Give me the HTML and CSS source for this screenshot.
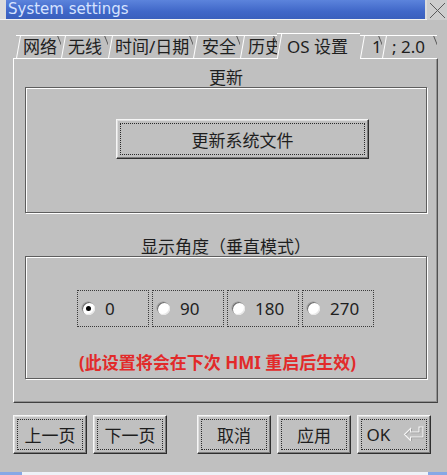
FILE: index.html
```html
<!DOCTYPE html>
<html lang="zh">
<head>
<meta charset="utf-8">
<title>System settings</title>
<link rel="stylesheet" href="styles.css">
</head>
<body>
<div class="window">
  <div class="titlebar">
    <div class="title">System settings</div>
    <div class="close">
      <svg width="20" height="20" viewBox="0 0 20 20"><path d="M3 3 L18 18 M18 3 L3 18" stroke="#5a5a5a" stroke-width="1" fill="none"/></svg>
    </div>
  </div>

  <div class="tabs">
    <div class="tab t-net">网络</div>
    <div class="tab t-wifi">无线</div>
    <div class="tab t-time">时间/日期</div>
    <div class="tab t-sec">安全</div>
    <div class="tab t-hist">历史</div>
    <div class="tab t-os active">OS 设置</div>
    <div class="tab t-one">1</div>
    <div class="tab t-ver">; 2.0</div>
  </div>

  <div class="panel">
    <div class="group-label">更新</div>
    <div class="group g1">
      <button class="btn btn-update">更新系统文件</button>
    </div>

    <div class="group-label gl2">显示角度（垂直模式）</div>
    <div class="group g2">
      <div class="radios">
        <label class="radio checked"><span class="dot"></span>0</label>
        <label class="radio"><span class="dot"></span>90</label>
        <label class="radio"><span class="dot"></span>180</label>
        <label class="radio"><span class="dot"></span>270</label>
      </div>
      <div class="note">(此设置将会在下次 HMI 重启后生效)</div>
    </div>
  </div>

  <div class="actions">
    <button class="btn">上一页</button>
    <button class="btn btn-gap">下一页</button>
    <button class="btn">取消</button>
    <button class="btn">应用</button>
    <button class="btn btn-ok">OK
      <svg class="enter" width="22" height="15" viewBox="0 0 22 15">
        <path d="M1.5 8.5 L7.5 2.5 L7.5 6 L16 6 L16 1 L20 1 L20 11 L7.5 11 L7.5 14.5 Z" fill="none" stroke="#8a8a8a" stroke-width="1" transform="translate(0.7 0.7)"/>
        <path d="M1.5 8.5 L7.5 2.5 L7.5 6 L16 6 L16 1 L20 1 L20 11 L7.5 11 L7.5 14.5 Z" fill="none" stroke="#f6f6f6" stroke-width="1.1"/>
      </svg>
    </button>
  </div>

  <div class="footer">
    <div class="foot-left"></div>
    <div class="foot-right"></div>
  </div>
</div>
</body>
</html>
```

FILE: styles.css
```css
html, body {
  margin: 0;
  padding: 0;
}

body {
  width: 447px;
  height: 475px;
  overflow: hidden;
  background: #c0c0c0;
  color: #1e1e1e;
  font-family: "Noto Sans", "Noto Sans CJK SC", sans-serif;
}

.window {
  height: 475px;
  display: flex;
  flex-direction: column;
}

/* Title bar */
.titlebar {
  display: flex;
  height: 19px;
  background: #dcdcdc;
  border-bottom: 1px solid #f2f2f2;
  flex: none;
}

.title {
  margin-left: 6px;
  width: 419px;
  box-sizing: border-box;
  padding-left: 2px;
  background: linear-gradient(#5c84dc, #4067c8 60%, #3a5fbd);
  color: #d6e3ff;
  font-family: "DejaVu Sans", sans-serif;
  font-size: 15px;
  line-height: 19px;
}

.close {
  margin-left: 2px;
  width: 20px;
  height: 20px;
  background: #cdcdcd;
}

.close svg {
  display: block;
}

/* Tabs */
.tabs {
  display: flex;
  height: 25px;
  margin: 13px 0 0 16px;
  position: relative;
  z-index: 1;
  flex: none;
}

.tab {
  position: relative;
  box-sizing: border-box;
  flex: none;
  height: 23px;
  margin-top: 2px;
  border-top: 1px solid #ffffff;
  padding-left: 7px;
  padding-right: 1px;
  font-size: 17px;
  line-height: 22px;
  white-space: nowrap;
  overflow: hidden;
}

.tab::before {
  content: "";
  position: absolute;
  left: 2px;
  top: 0;
  bottom: 0;
  width: 1px;
  background: #ffffff;
  transform: skewX(-10deg);
}

.tab::after {
  content: "";
  position: absolute;
  right: 1px;
  top: 0;
  height: 9px;
  width: 1px;
  background: #555555;
  transform: skewX(22deg);
}

.t-net { width: 45px; }
.t-wifi { width: 47px; }
.t-time { width: 85px; }
.t-sec { width: 47px; padding-left: 9px; }
.t-hist { width: 37px; padding-left: 8px; }
.t-os { width: 83px; padding-left: 10px; }
.t-one { width: 22px; padding-left: 12px; }
.t-ver { width: 55px; padding-left: 10px; }

.tab.active {
  height: 26px;
  margin-top: 0;
  margin-bottom: -1px;
  line-height: 26px;
  background: #c0c0c0;
}

.tab.active::after {
  display: none;
}

/* Panel */
.panel {
  box-sizing: border-box;
  flex: none;
  width: 425px;
  height: 345px;
  margin-left: 13px;
  padding: 9px 0 0 11px;
  border: 1px solid;
  border-color: #ffffff #505050 #404040 #ffffff;
  box-shadow: inset -1px -1px 0 #929292;
}

.group-label {
  width: 402px;
  height: 19px;
  text-align: center;
  font-size: 17px;
  line-height: 19px;
  white-space: nowrap;
}

.gl2 {
  margin-top: 24px;
}

.group {
  box-sizing: border-box;
  width: 402px;
  border: 1px solid #5e5e5e;
  box-shadow: inset 1px 1px 0 #ffffff, 1px 1px 0 #ffffff;
}

.g1 {
  height: 126px;
  padding: 31px 0 0 90px;
}

.g2 {
  height: 123px;
  padding: 33px 0 0 51px;
}

/* Buttons */
.btn {
  position: relative;
  box-sizing: border-box;
  flex: none;
  width: 74px;
  height: 39px;
  margin: 0;
  padding: 0;
  display: flex;
  align-items: center;
  justify-content: center;
  background: #c0c0c0;
  color: #1e1e1e;
  font: inherit;
  font-size: 17px;
  border: 1px solid;
  border-color: #f6f6f6 #2e2e2e #2e2e2e #f6f6f6;
  box-shadow: inset -1px -1px 0 #7c7c7c, inset 1px 1px 0 #dedede;
}

.btn::after {
  content: "";
  position: absolute;
  top: 3px;
  left: 3px;
  right: 3px;
  bottom: 3px;
  border: 1px dotted #2a2a2a;
}

.btn-update {
  width: 253px;
  height: 40px;
}

.btn-gap {
  margin-right: 24px;
}

.btn-ok {
  gap: 13px;
  padding-left: 4px;
}

.enter {
  display: block;
  margin-top: -2px;
}

/* Radios */
.radios {
  display: flex;
  gap: 3px;
}

.radio {
  box-sizing: border-box;
  width: 72px;
  height: 37px;
  border: 1px dotted #3a3a3a;
  display: flex;
  align-items: center;
  padding-left: 4px;
  font-size: 17px;
}

.dot {
  position: relative;
  width: 13px;
  height: 13px;
  margin-right: 10px;
  border-radius: 50%;
  background: #ffffff;
  box-shadow: inset 1px 1px 0 #6e6e6e, inset -1px -1px 0 #e8e8e8, -0.5px -0.5px 0 #9a9a9a;
}

.checked .dot::after {
  content: "";
  position: absolute;
  left: 4px;
  top: 4px;
  width: 5px;
  height: 5px;
  border-radius: 50%;
  background: #000000;
}

.note {
  margin: 27px 0 0 2px;
  color: #e22a2a;
  font-weight: bold;
  font-size: 17px;
  line-height: 18px;
  white-space: nowrap;
}

/* Bottom actions */
.actions {
  display: flex;
  gap: 6px;
  margin: 12px 0 0 13px;
  flex: none;
}

.footer {
  margin-top: 18px;
  height: 3px;
  background: #eef2f8;
  display: flex;
  justify-content: space-between;
  flex: none;
}

.foot-left {
  width: 22px;
  background: #86a8e6;
}

.foot-right {
  width: 19px;
  background: #86a8e6;
}
```
